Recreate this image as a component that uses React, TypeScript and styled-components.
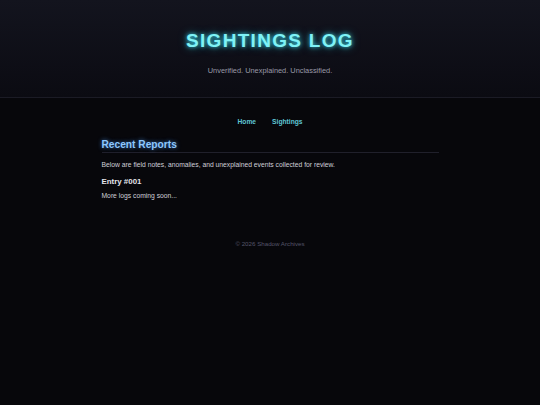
import React from "react";
import styled, { createGlobalStyle } from "styled-components";

const Global = createGlobalStyle`
  html, body { margin: 0; padding: 0; background: #07070b; }
  body { font-family: "Liberation Sans", Arial, sans-serif; color: #cfcfd8; }
  * { box-sizing: border-box; }
`;

const Page = styled.div`
  min-height: 405px;
  background: #07070b;
`;

const Header = styled.header`
  padding: 29.5px 0 22.5px;
  text-align: center;
  background: linear-gradient(180deg, #13141e 0%, #0b0b12 100%);
  border-bottom: 1px solid #1b1b25;
`;

const Title = styled.h1`
  margin: 0;
  font-size: 19px;
  line-height: 22px;
  font-weight: 700;
  letter-spacing: 1.3px;
  color: #7ff2f6;
  text-shadow: 0 0 4px rgba(60, 220, 235, 0.9), 0 0 9px rgba(40, 190, 220, 0.6);
`;

const Tagline = styled.p`
  margin: 14px 0 0;
  font-size: 7.4px;
  line-height: 9px;
  color: #9a9aa8;
`;

const Nav = styled.nav`
  display: flex;
  justify-content: center;
  gap: 16px;
  padding-top: 19.5px;
`;

const NavLink = styled.a`
  font-size: 6.7px;
  line-height: 8px;
  font-weight: 700;
  color: #5fc6d6;
  text-decoration: none;
`;

const Main = styled.main`
  width: 337px;
  margin: 13.3px auto 0;
`;

const SectionTitle = styled.h2`
  margin: 0;
  font-size: 10.2px;
  line-height: 12px;
  font-weight: 700;
  color: #8ec8ff;
  text-shadow: 0 0 4px rgba(80, 160, 255, 0.75);
  padding-bottom: 1.4px;
  border-bottom: 1px solid #20202b;
`;

const Text = styled.p<{ $gap: number }>`
  margin: ${(p) => p.$gap}px 0 0;
  font-size: 6.75px;
  line-height: 8px;
  color: #cfcfd8;
`;

const EntryTitle = styled.h3`
  margin: 7.9px 0 0;
  font-size: 7.9px;
  line-height: 10px;
  font-weight: 700;
  color: #e4e4ec;
`;

const Footer = styled.footer`
  margin-top: 40.6px;
  text-align: center;
  font-size: 6.2px;
  line-height: 8px;
  color: #55556a;
`;

export default function App() {
  return (
    <Page>
      <Global />
      <Header>
        <Title>SIGHTINGS LOG</Title>
        <Tagline>Unverified. Unexplained. Unclassified.</Tagline>
      </Header>
      <Nav>
        <NavLink href="#">Home</NavLink>
        <NavLink href="#">Sightings</NavLink>
      </Nav>
      <Main>
        <SectionTitle>Recent Reports</SectionTitle>
        <Text $gap={8}>Below are field notes, anomalies, and unexplained events collected for review.</Text>
        <EntryTitle>Entry #001</EntryTitle>
        <Text $gap={4.8}>More logs coming soon...</Text>
      </Main>
      <Footer>© 2026 Shadow Archives</Footer>
    </Page>
  );
}
